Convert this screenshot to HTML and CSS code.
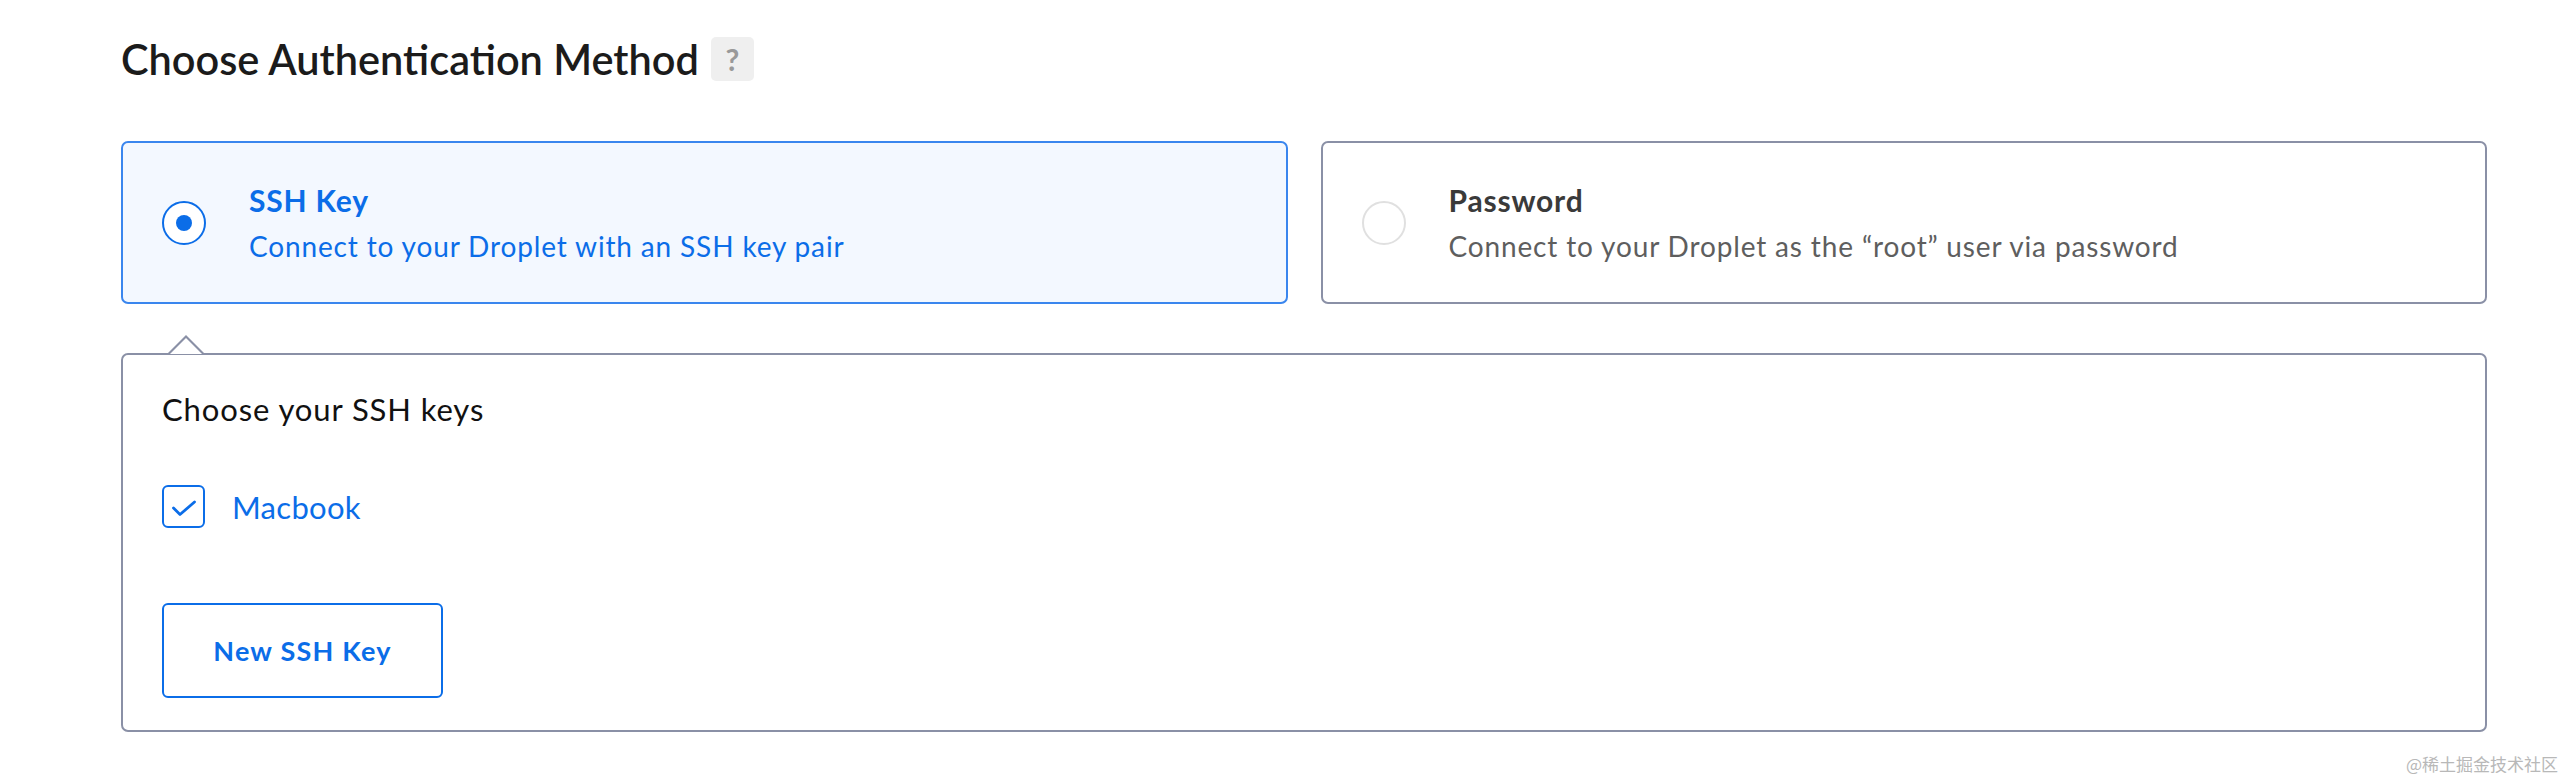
FILE: index.html
```html
<!DOCTYPE html>
<html lang="en">
<head>
    <meta charset="UTF-8">
    <title>Choose Authentication Method</title>
    <link rel="stylesheet" href="styles.css">
</head>
<body>
<div class="page">
    <h2 class="heading"><span>Choose Authentication Method</span><span class="help">?</span></h2>

    <!-- Method cards -->
    <div class="methods">
        <label class="method method-active">
            <span class="radio"><span class="radio-dot"></span></span>
            <span class="method-text">
                <span class="method-title">SSH Key</span>
                <span class="method-desc">Connect to your Droplet with an SSH key pair</span>
            </span>
        </label>
        <label class="method">
            <span class="radio"></span>
            <span class="method-text">
                <span class="method-title">Password</span>
                <span class="method-desc">Connect to your Droplet as the “root” user via password</span>
            </span>
        </label>
    </div>

    <!-- SSH key picker -->
    <div class="keys-panel">
        <div class="keys-title">Choose your SSH keys</div>
        <label class="key-row">
            <span class="checkbox">
                <svg width="42" height="42" viewBox="0 0 42 42">
                    <polyline points="10.5,22 17,28.5 31.5,16" fill="none" stroke="#0b6de8" stroke-width="2.8" stroke-linecap="round" stroke-linejoin="round"/>
                </svg>
            </span>
            <span class="key-name">Macbook</span>
        </label>
        <button class="new-key">New SSH Key</button>
    </div>
</div>
<div class="watermark">@稀土掘金技术社区</div>
</body>
</html>
```

FILE: styles.css
```css
body {
    margin: 0;
    background: #ffffff;
    font-family: Lato, "Noto Sans", Arial, sans-serif;
}

.page {
    padding: 33px 79px 0 121px;
}

.heading {
    display: flex;
    align-items: center;
    gap: 12px;
    margin: 0;
    height: 52px;
    font-size: 41.5px;
    font-weight: 600;
    color: #1b1b1b;
}

.help {
    display: flex;
    align-items: center;
    justify-content: center;
    width: 43px;
    height: 44px;
    border-radius: 5px;
    background: #efefef;
    color: #999999;
    font-size: 30px;
    font-weight: 700;
}

.methods {
    display: grid;
    grid-template-columns: 1fr 1fr;
    gap: 33px;
    margin-top: 56px;
}

.method {
    display: flex;
    align-items: center;
    height: 163px;
    box-sizing: border-box;
    padding-left: 39px;
    border: 2px solid #8a90a6;
    border-radius: 7px;
    background: #ffffff;
}

.method-active {
    border-color: #3a86ee;
    background: #f3f8ff;
}

.radio {
    display: flex;
    align-items: center;
    justify-content: center;
    width: 44px;
    height: 44px;
    box-sizing: border-box;
    border: 2px solid #e0e0e0;
    border-radius: 50%;
    background: #ffffff;
    flex-shrink: 0;
}

.method-active .radio {
    border-color: #0b6de8;
}

.radio-dot {
    width: 16px;
    height: 16px;
    border-radius: 50%;
    background: #0b6de8;
}

.method-text {
    display: flex;
    flex-direction: column;
    margin-left: 43px;
}

.method-title {
    font-size: 30px;
    line-height: 36px;
    font-weight: 700;
    letter-spacing: 0.8px;
    color: #3a3a3a;
}

.method-desc {
    margin-top: 10px;
    font-size: 28px;
    line-height: 36px;
    letter-spacing: 0.85px;
    color: #5e5e5e;
}

.method-active .method-title,
.method-active .method-desc {
    color: #0b6de8;
}

.keys-panel {
    position: relative;
    margin-top: 49px;
    height: 379px;
    box-sizing: border-box;
    padding: 34px 39px 0;
    border: 2px solid #8a90a6;
    border-radius: 7px;
}

/* little pointer towards the selected card */
.keys-panel::before,
.keys-panel::after {
    content: "";
    position: absolute;
    width: 0;
    height: 0;
    border-style: solid;
    border-color: transparent;
}

.keys-panel::before {
    top: -20px;
    left: 45px;
    border-width: 0 18px 18px;
    border-bottom-color: #8a90a6;
}

.keys-panel::after {
    top: -17px;
    left: 47px;
    border-width: 0 16px 16px;
    border-bottom-color: #ffffff;
}

.keys-title {
    font-size: 31px;
    line-height: 40px;
    letter-spacing: 0.9px;
    color: #111111;
}

.key-row {
    display: flex;
    align-items: center;
    margin-top: 56px;
}

.checkbox {
    display: flex;
    width: 43px;
    height: 43px;
    box-sizing: border-box;
    border: 2px solid #0b6de8;
    border-radius: 6px;
    align-items: center;
    justify-content: center;
}

.checkbox svg {
    flex-shrink: 0;
}

.key-name {
    margin-left: 27px;
    font-size: 31px;
    letter-spacing: 0.3px;
    color: #0b6de8;
}

.new-key {
    display: block;
    margin-top: 75px;
    width: 281px;
    height: 95px;
    border: 2px solid #0b6de8;
    border-radius: 6px;
    background: #ffffff;
    color: #0b6de8;
    font-family: Lato, "Noto Sans", Arial, sans-serif;
    font-size: 27px;
    font-weight: 700;
    letter-spacing: 1.2px;
}

.watermark {
    position: absolute;
    top: 751px;
    right: 8px;
    font-family: "Noto Sans CJK SC", sans-serif;
    font-size: 17px;
    color: #b8b8b8;
}
```
